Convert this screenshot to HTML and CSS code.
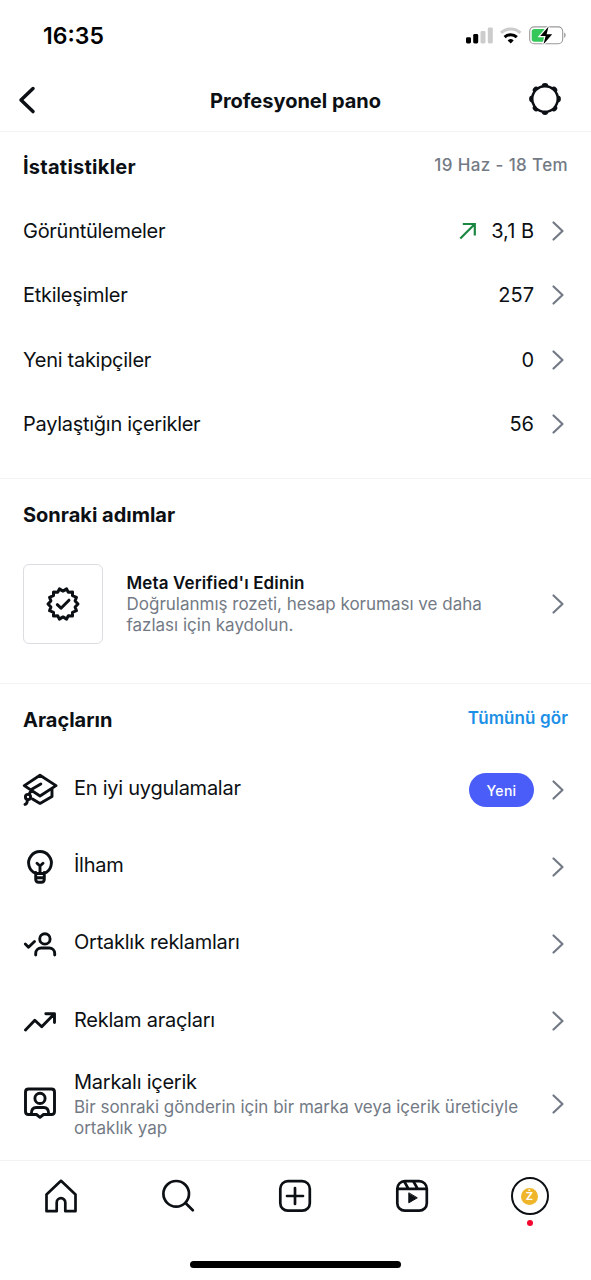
FILE: index.html
```html
<!DOCTYPE html>
<html lang="tr">
<head>
<meta charset="utf-8">
<title>Profesyonel pano</title>
<link rel="stylesheet" href="styles.css">
</head>
<body>
<svg class="defs" width="0" height="0">
  <symbol id="chevron" viewBox="0 0 14 22"><path d="M2.500 2.500 11.500 11 2.500 19.500" fill="none" stroke="currentColor" stroke-width="2.200" stroke-linecap="round" stroke-linejoin="round"/></symbol>
</svg>
<div class="screen">
  <div class="status">
    <span class="time">16:35</span>
    <svg class="status-icons" width="102" height="20" viewBox="465 25 102 20">
      <rect x="466" y="37.2" width="5" height="6.3" rx="1.4"/>
      <rect x="473.2" y="34" width="5" height="9.5" rx="1.4"/>
      <rect x="480.5" y="31" width="5" height="12.5" rx="1.4" fill="#ccc"/>
      <rect x="487.8" y="27.4" width="5" height="16.1" rx="1.4" fill="#ccc"/>
      <path d="M501 32.8a14 14 0 0 1 19.400 0" fill="none" stroke="#ccc" stroke-width="3"/>
      <path d="M504.600 37.100a8.800 8.800 0 0 1 12.200 0" fill="none" stroke="#000" stroke-width="3"/>
      <path d="M510.700 43.600l-3-3.100a4.300 4.300 0 0 1 6 0z"/>
      <rect x="529.700" y="26.900" width="33" height="16.800" rx="4.500" fill="#fff" stroke="#999" stroke-width="1.100"/>
      <rect x="531.700" y="28.900" width="14" height="12.800" rx="2.600" fill="#34c759"/>
      <path d="M564.200 32.600c1.900.8 1.900 4.600 0 5.400z" fill="#999"/>
      <path d="M548.600 26.600 540.200 36h5.400l-2.100 8.200 8.700-10h-5.600z" stroke="#fff" stroke-width="2.400" paint-order="stroke"/>
    </svg>
  </div>
  <header class="header">
    <svg class="back" width="20" height="30" viewBox="0 0 20 30"><path d="M16 3.500 4 15l12 11.600" fill="none" stroke="#0c1014" stroke-width="3.500" stroke-linecap="round" stroke-linejoin="round"/></svg>
    <h1 class="title">Profesyonel pano</h1>
    <svg class="gear" width="34" height="34" viewBox="-17 -17 34 34"><g fill="#0c1014"><circle r="14"/><g id="teeth"><circle cy="-12.500" r="3.400"/><circle cy="12.500" r="3.400"/><circle cx="-12.500" r="3.400"/><circle cx="12.500" r="3.400"/></g><use href="#teeth" transform="rotate(45)"/></g><circle r="11.500" fill="#fff"/></svg>
  </header>

  <section class="section stats">
    <div class="heading"><h2 class="h wide">İstatistikler</h2><span class="range">19 Haz - 18 Tem</span></div>
    <div class="row"><span class="label">Görüntülemeler</span><svg class="up" width="20" height="20" viewBox="0 0 20 20"><path d="M2.300 17.500 16.800 3M4.800 3h12v11.500" fill="none" stroke="#1c8742" stroke-width="2.200"/></svg><span class="value">3,1 B</span><svg class="chev"><use href="#chevron"/></svg></div>
    <div class="row"><span class="label">Etkileşimler</span><span class="value">257</span><svg class="chev"><use href="#chevron"/></svg></div>
    <div class="row"><span class="label">Yeni takipçiler</span><span class="value">0</span><svg class="chev"><use href="#chevron"/></svg></div>
    <div class="row"><span class="label">Paylaştığın içerikler</span><span class="value">56</span><svg class="chev"><use href="#chevron"/></svg></div>
  </section>

  <section class="section steps">
    <div class="heading"><h2 class="h">Sonraki adımlar</h2></div>
    <div class="verify">
      <div class="tile"><svg width="36" height="36" viewBox="-18 -18 36 36" fill="none" stroke="#0c1014" stroke-width="3" stroke-linejoin="round" stroke-linecap="round"><path d="M0.000 -12.900L3.600 -15.100L5.300 -11.800L9.500 -12.100L9.500 -8.300L13.500 -6.700L12.100 -3.100L15.000 0.000L12.100 3.100L13.500 6.700L9.500 8.300L9.500 12.100L5.300 11.800L3.600 15.100L0.000 12.900L-3.600 15.100L-5.300 11.800L-9.500 12.100L-9.500 8.300L-13.500 6.700L-12.100 3.100L-15.000 0.000L-12.100 -3.100L-13.500 -6.700L-9.500 -8.300L-9.500 -12.100L-5.300 -11.800L-3.600 -15.100Z"/><path d="M-5.700.7-2 4.200 6-3.800"/></svg></div>
      <div class="copy"><div class="strong">Meta Verified'ı Edinin</div><p class="sub">Doğrulanmış rozeti, hesap koruması ve daha<br>fazlası için kaydolun.</p></div>
      <svg class="chev"><use href="#chevron"/></svg>
    </div>
  </section>

  <section class="section tools">
    <div class="heading"><h2 class="h">Araçların</h2><a class="all">Tümünü gör</a></div>
    <div class="tool">
      <svg class="ico" viewBox="22 772 36 36"><path d="M40 775.300 56 785.600 40 796 24.300 785.600zM40.800 784l-9 5.200-2.700 5M52 789v7.600l-12 6.800-7.500-4.400M27.300 800.500c0 2.500-.8 3.500-2.300 3.900"/><circle cx="28" cy="797" r="2.600"/></svg>
      <span class="label">En iyi uygulamalar</span><span class="badge">Yeni</span><svg class="chev"><use href="#chevron"/></svg>
    </div>
    <div class="tool">
      <svg class="ico" viewBox="22 849 36 36"><path d="M35.700 873.500a11.400 11.400 0 1 1 8.600 0M35.700 872.500v6.500q0 3.300 3 3.300h2.600q3 0 3-3.300v-6.500M35.700 877.800h8.600M40 873v-7M37 863.200l3 2.800 3-2.800M35.700 873.500h8.600"/></svg>
      <span class="label">İlham</span><svg class="chev"><use href="#chevron"/></svg>
    </div>
    <div class="tool">
      <svg class="ico" viewBox="22 926 36 36"><path d="m25.300 944 3.200 3.200 6-5.700M35.700 955v-1.500c0-3.500 2.500-5.500 5.500-5.500h8c3 0 5.500 2 5.500 5.500v1.500"/><circle cx="44.900" cy="938.900" r="5.200"/></svg>
      <span class="label">Ortaklık reklamları</span><svg class="chev"><use href="#chevron"/></svg>
    </div>
    <div class="tool">
      <svg class="ico" viewBox="22 1003.500 36 36"><path d="m25.500 1030.500 9.300-9.700 6.900 6.500 12.700-13M45.800 1014.300h8.700v8.700"/></svg>
      <span class="label">Reklam araçları</span><svg class="chev"><use href="#chevron"/></svg>
    </div>
    <div class="tool brand">
      <svg class="ico" viewBox="22 1086.500 36 36"><path d="M28.500 1089.500h23q3 0 3 3v19.500q0 3-3 3h-8l-3.500 2.800-3.500-2.800h-8q-3 0-3-3v-19.500q0-3 3-3zM31.300 1114.500c0-5 2.500-6.500 5-6.500h7.400c2.500 0 5 1.500 5 6.500"/><circle cx="40" cy="1098.900" r="5.100"/></svg>
      <div class="brand-copy"><div class="label">Markalı içerik</div><p class="sub">Bir sonraki gönderin için bir marka veya içerik üreticiyle<br>ortaklık yap</p></div>
      <svg class="chev"><use href="#chevron"/></svg>
    </div>
  </section>

  <nav class="nav">
    <svg width="40" height="40" viewBox="0 0 40 40"><path d="M5.500 35.200V18.500L20 4.800l14.500 13.700v16.700H24.300v-8.700a4.300 4.300 0 0 0-8.600 0v8.700z"/></svg>
    <svg width="40" height="40" viewBox="0 0 40 40"><circle cx="18.200" cy="17.800" r="12.800"/><path d="m27.500 27 7.300 7.300"/></svg>
    <svg width="40" height="40" viewBox="0 0 40 40"><rect x="5.300" y="5.200" width="29.500" height="29.500" rx="7.500"/><path d="M20 12v16M12 20h16"/></svg>
    <svg width="40" height="40" viewBox="0 0 40 40"><rect x="5.300" y="5.200" width="29.500" height="29.500" rx="7.500"/><path d="M5.500 12.900h29M12.300 5.500l4 7.200M21.500 5.500l4 7.200"/><path d="M16.800 17.200v9.600l8.200-4.800z" fill="#0c1014" stroke-width="1"/></svg>
    <div class="me"><div class="ring"><span class="coin">Ż</span></div><i class="dot"></i></div>
  </nav>
  <div class="home"></div>
</div>
</body>
</html>
```

FILE: styles.css
```css
* { box-sizing: border-box; margin: 0; padding: 0; }
body { background: #fff; color: #0c1014; font-family: Inter, "Liberation Sans", sans-serif; font-size: 20px; }
.defs { position: absolute; }
.screen { width: 591px; height: 1280px; display: flex; flex-direction: column; overflow: hidden; }
.status { height: 70px; display: flex; justify-content: space-between; align-items: center; padding: 0 24px 0 43px; color: #000; }
.time { font-size: 23px; font-weight: 600; line-height: 30px; margin-top: 2px; }
.header { height: 62px; display: grid; grid-template-columns: 34px 1fr 34px; align-items: center; padding: 0 29px 3px 17px; border-bottom: 1px solid #f2f3f4; }
.title { font-size: 20px; font-weight: 650; line-height: 26px; margin: 4px 0 0 12px; text-align: center; }
.back { margin-top: 1px; }
.section { border-bottom: 1px solid #f2f3f4; padding: 0 23px; }
.stats { height: 347px; }
.steps { height: 205px; }
.tools { height: 477px; }
.heading { display: flex; justify-content: space-between; align-items: center; height: 68px; }
.stats .heading { height: 67px; padding-bottom: 1px; }
.h { font-size: 20px; font-weight: 680; line-height: 26px; margin-top: 3px; }
.wide { letter-spacing: .25px; }
.range { font-size: 17px; font-weight: 500; color: #737a85; letter-spacing: .37px; }
.all { font-size: 17px; font-weight: 600; color: #1c90e6; letter-spacing: .1px; }
.row { height: 64.300px; display: flex; align-items: center; }
.label { font-size: 20px; line-height: 26px; flex: 1; letter-spacing: -.28px; }
.value { margin-right: 17px; letter-spacing: 0; }
.up { margin-right: 13px; }
.chev { width: 14px; height: 22px; color: #737a85; margin-right: 3px; flex: none; }
.verify { display: flex; align-items: center; height: 80px; margin-top: 17px; }
.tile { width: 80px; height: 80px; border: 1.500px solid #dbdde1; border-radius: 6px; display: flex; align-items: center; justify-content: center; }
.copy { flex: 1; margin: 1px 0 0 23.500px; }
.strong { font-size: 17px; font-weight: 600; line-height: 21px; letter-spacing: .12px; }
.sub { font-size: 17px; line-height: 21px; color: #737a85; letter-spacing: 0; white-space: nowrap; }
.tool { height: 77.200px; display: flex; align-items: center; }
.tools .heading { height: 67px; }
.tools .h { margin-top: 4px; }
.tools .label { margin-left: 16px; padding-bottom: 3px; letter-spacing: -.25px; }
.ico { width: 36px; height: 36px; margin-left: -1px; flex: none; fill: none; stroke: #0c1014; stroke-width: 2.900; stroke-linecap: round; stroke-linejoin: round; }
.badge { width: 65px; height: 34px; border-radius: 17px; background: #4a5df9; color: #fff; font-size: 14px; font-weight: 550; line-height: 35px; text-align: center; margin-right: 17px; letter-spacing: .3px; }
.brand { height: 88px; }
.brand-copy { flex: 1; margin: 1px 0 0 16px; }
.tools .brand-copy .label { margin-left: 0; padding-bottom: 2px; }
.nav { height: 82px; display: flex; justify-content: space-between; padding: 15px 41.500px 0 41px; }
.nav svg { fill: none; stroke: #0c1014; stroke-width: 2.700; stroke-linecap: round; stroke-linejoin: round; }
.me { width: 40px; display: flex; flex-direction: column; align-items: center; }
.ring { width: 38px; height: 38px; border: 2px solid #0c1014; border-radius: 50%; display: flex; align-items: center; justify-content: center; margin-top: 1px; }
.coin { width: 17px; height: 17px; border-radius: 50%; background: #efb52b; color: #fff; font-size: 11px; font-weight: 700; line-height: 17px; text-align: center; }
.dot { width: 6px; height: 6px; border-radius: 50%; background: #f5062f; margin-top: 5px; }
.home { width: 211px; height: 7px; border-radius: 4px; background: #000; margin: 18px 0 0 190px; }
```
